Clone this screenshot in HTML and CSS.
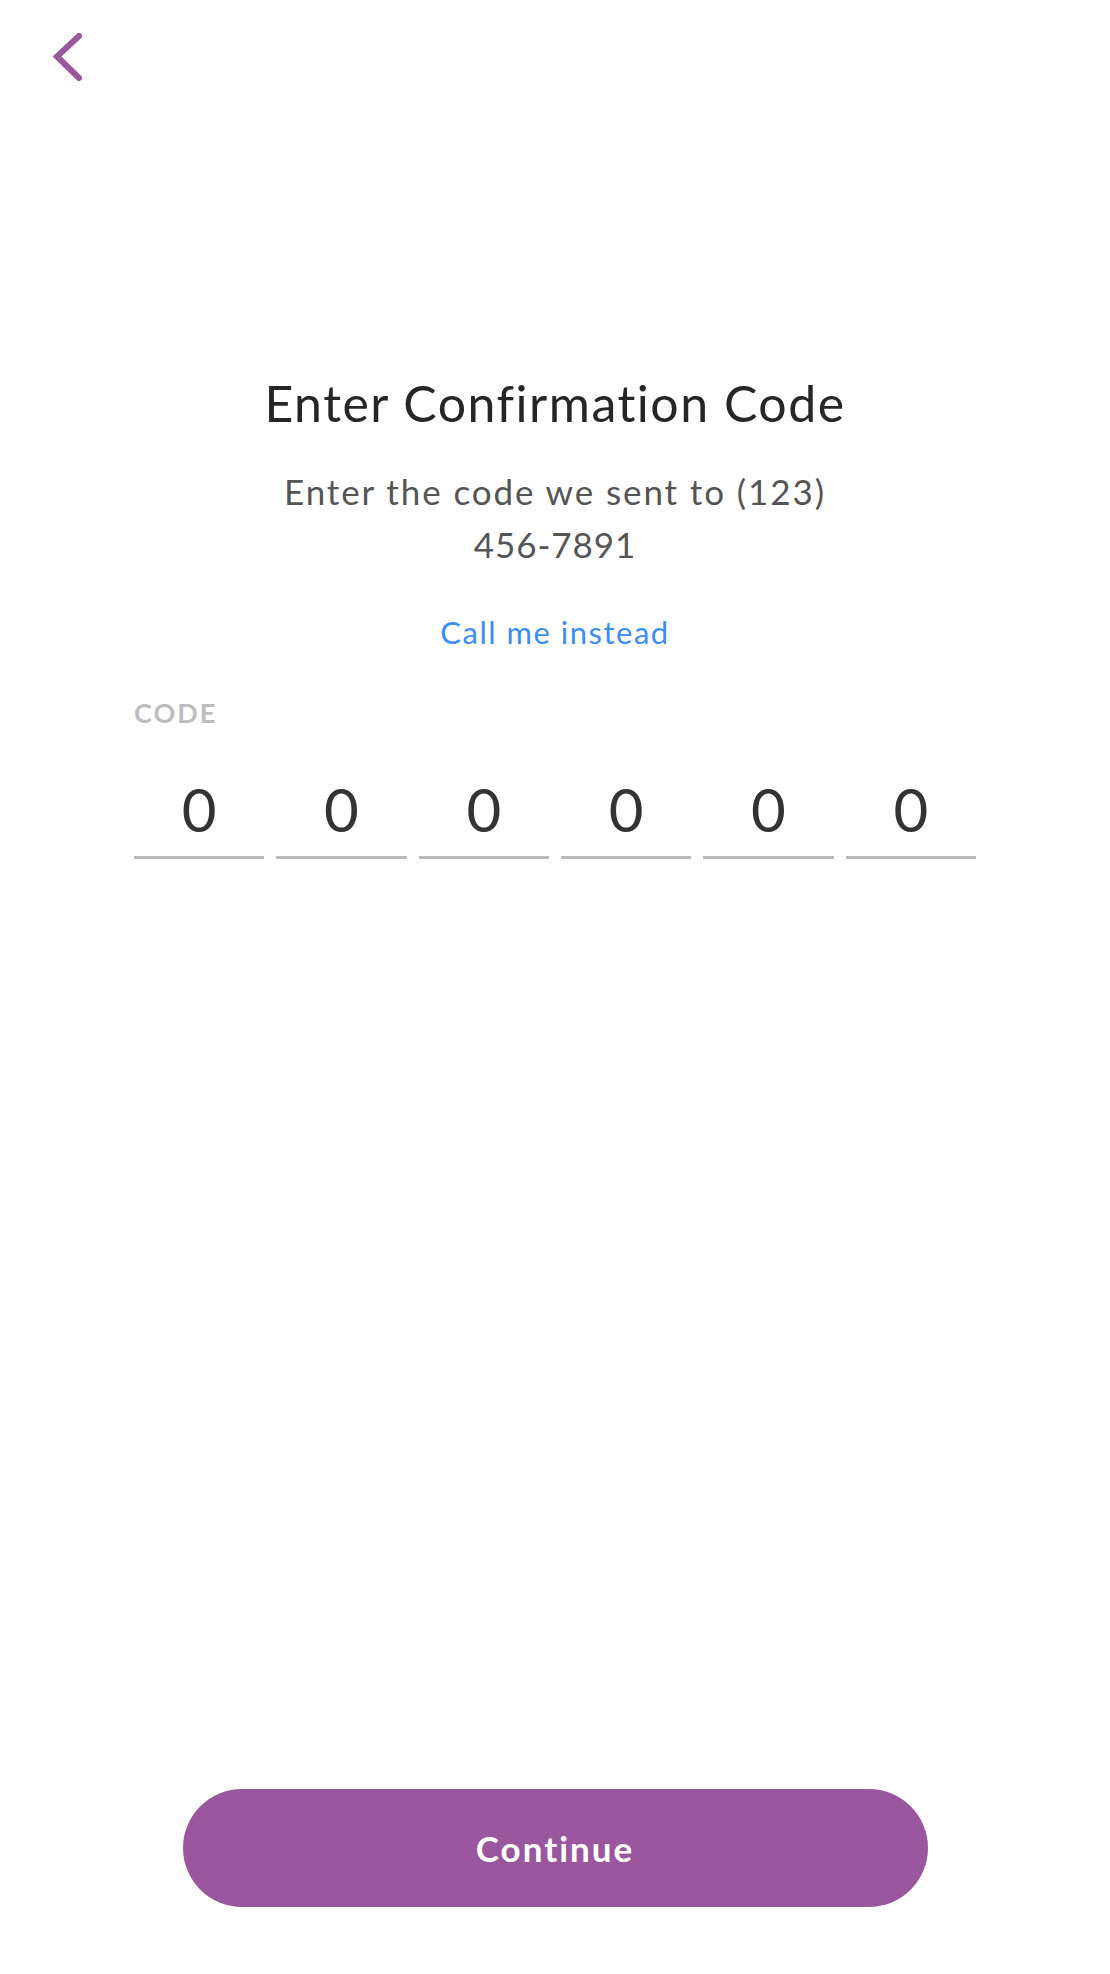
FILE: index.html
```html
<!DOCTYPE html>
<html lang="en">
<head>
<meta charset="utf-8">
<title>Enter Confirmation Code</title>
<link rel="stylesheet" href="styles.css">
</head>
<body>
<div class="screen">
  <header class="topbar">
    <button class="back" aria-label="Back">
      <svg width="40" height="60" viewBox="0 0 40 60" aria-hidden="true">
        <polyline points="27,3 5,23.5 27,45" fill="none" stroke="#9a579e" stroke-width="6" stroke-linecap="round" stroke-linejoin="miter"/>
      </svg>
    </button>
  </header>

  <main class="content">
    <h1 class="title">Enter Confirmation Code</h1>
    <p class="subtitle">Enter the code we sent to (123) <span class="phone-part">456-7891</span></p>
    <a class="call-link" href="#">Call me instead</a>

    <section class="code-field">
      <div class="code-label">CODE</div>
      <div class="code-boxes">
        <div class="code-box">0</div>
        <div class="code-box">0</div>
        <div class="code-box">0</div>
        <div class="code-box">0</div>
        <div class="code-box">0</div>
        <div class="code-box">0</div>
      </div>
    </section>
  </main>

  <footer class="actions">
    <button class="continue">Continue</button>
  </footer>
</div>
</body>
</html>
```

FILE: styles.css
```css
html, body {
  margin: 0;
  padding: 0;
  background: #ffffff;
}

body {
  font-family: "Lato", "Noto Sans", sans-serif;
  font-variant-ligatures: none;
  color: #2a2a2a;
}

.screen {
  min-height: 100vh;
  box-sizing: border-box;
  display: flex;
  flex-direction: column;
  padding-bottom: 67px;
}

.topbar {
  padding: 33px 0 0 52px;
  height: 80px;
  box-sizing: border-box;
}

.back {
  display: block;
  padding: 0;
  margin: 0;
  border: 0;
  background: none;
  width: 40px;
  height: 60px;
  cursor: pointer;
}

.back svg {
  display: block;
}

.content {
  display: flex;
  flex-direction: column;
  align-items: center;
  padding-top: 292.6px;
}

.title {
  margin: 0;
  font-size: 50px;
  line-height: 60px;
  font-weight: 400;
  letter-spacing: 1.5px;
  color: #262626;
  text-align: center;
}

.subtitle {
  margin: 32.4px 0 0;
  max-width: 640px;
  font-size: 35px;
  line-height: 53px;
  letter-spacing: 1.9px;
  color: #555555;
  text-align: center;
}

.phone-part {
  white-space: nowrap;
  letter-spacing: 0.9px;
}

.call-link {
  margin-top: 41px;
  font-size: 31px;
  line-height: 40px;
  letter-spacing: 1.5px;
  color: #3b8ef5;
  text-decoration: none;
}

.code-field {
  width: 842px;
  margin-top: 45.5px;
}

.code-label {
  font-size: 27px;
  line-height: 32px;
  font-weight: 700;
  color: #bdbdbd;
  letter-spacing: 2px;
}

.code-boxes {
  display: flex;
  gap: 12px;
  margin-top: 43.3px;
}

.code-box {
  flex: 1;
  text-align: center;
  font-size: 60px;
  line-height: 72px;
  color: #333333;
  padding-bottom: 11px;
  border-bottom: 3px solid #bbbbbb;
}

.actions {
  margin-top: auto;
  display: flex;
  justify-content: center;
}

.continue {
  width: 745px;
  height: 118px;
  border: 0;
  border-radius: 59px;
  background: #9a579e;
  color: #ffffff;
  font-family: "Lato", "Noto Sans", sans-serif;
  font-size: 35px;
  font-weight: 700;
  letter-spacing: 2px;
  cursor: pointer;
}
```
